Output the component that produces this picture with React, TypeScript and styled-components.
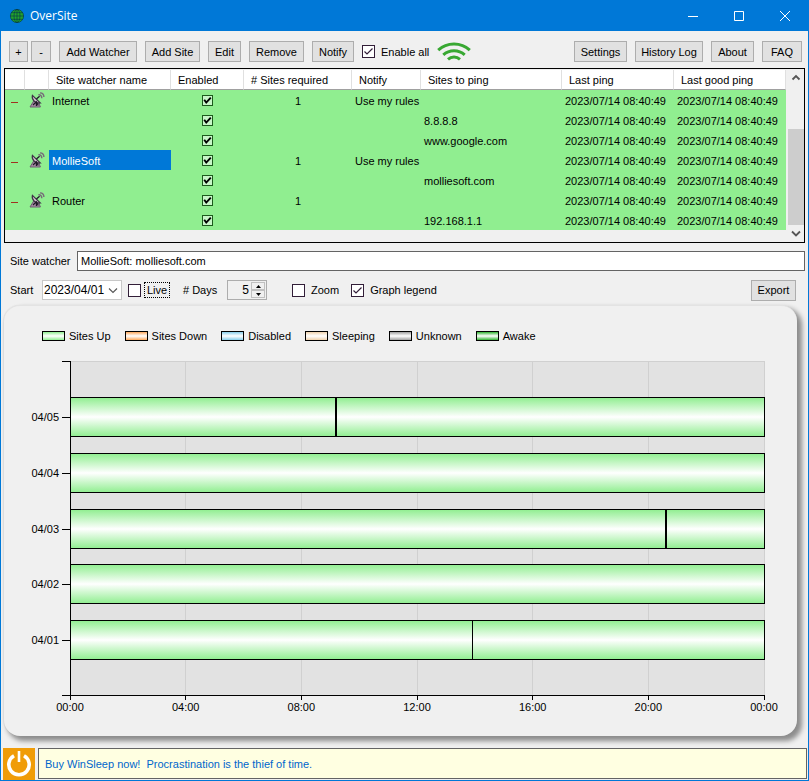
import React, { useState } from "react";
import styled, { createGlobalStyle, css } from "styled-components";

const GlobalStyle = createGlobalStyle`
  *, *::before, *::after { box-sizing: border-box; }
  body { margin: 0; background: #f0f0f0; }
  body, button, input, select {
    font-family: "Liberation Sans", Arial, sans-serif;
    font-size: 11px;
    line-height: 14px;
    color: #000;
  }
`;

const Window = styled.div`
  display: flex;
  flex-direction: column;
  min-height: 100vh;
  border: 1px solid #0078d7;
  background: #f0f0f0;
`;

const TitleBar = styled.header`
  display: flex;
  align-items: center;
  height: 30px;
  padding-left: 8px;
  background: #0078d7;
  color: #fff;
`;

const Title = styled.h1`
  flex: 1;
  margin: 0 0 0 5px;
  font: 400 12px/16px "Open Sans", sans-serif;
`;

const CaptionButton = styled.button`
  display: flex;
  align-items: center;
  justify-content: center;
  width: 46px;
  height: 30px;
  padding: 0;
  border: 0;
  background: transparent;
`;

const Toolbar = styled.div`
  display: flex;
  align-items: center;
  gap: 8px;
  padding: 10px 6px 6px 8px;
`;

const Button = styled.button<{ $w: number }>`
  width: ${(p) => p.$w}px;
  height: 21px;
  padding: 0;
  border: 1px solid #adadad;
  background: #e1e1e1;
  white-space: nowrap;
`;

const ExpandGroup = styled.div`
  display: flex;
  gap: 3px;
`;

const Spacer = styled.div`
  flex: 1;
`;

const CheckLabel = styled.label`
  display: flex;
  align-items: center;
  gap: 6px;
  white-space: nowrap;
`;

const tick = (path: string, stroke: string, width: number) =>
  `url("data:image/svg+xml,${encodeURIComponent(
    `<svg xmlns='http://www.w3.org/2000/svg' viewBox='0 0 11 11'><path d='${path}' fill='none' stroke='${stroke}' stroke-width='${width}'/></svg>`
  )}")`;

const CheckBox = styled.input.attrs({ type: "checkbox" })<{ $grid?: boolean }>`
  appearance: none;
  flex: none;
  display: block;
  margin: 0;
  width: 13px;
  height: 13px;
  border: 1px solid #321e38;
  background: #fff center / 11px 11px no-repeat;
  &:checked {
    background-image: ${tick("M1.5 5.5 L4 8 L9.5 2.5", "#321e38", 1.2)};
  }
  ${(p) =>
    p.$grid &&
    css`
      width: 11px;
      height: 11px;
      margin: 0 auto;
      border-color: #1c5a1c;
      background-color: #c8f6c8;
      background-size: 9px 9px;
      &:checked {
        background-image: ${tick("M1.5 4.5 L4 8 L9.5 2", "#000", 2.3)};
      }
    `}
`;

const GridFrame = styled.section`
  display: flex;
  margin: 0 3px;
  height: 175px;
  border: 1px solid #000;
`;

const GridScroller = styled.div`
  flex: 1;
  min-width: 0;
  overflow: hidden;
  padding-top: 1px;
`;

const Table = styled.table`
  width: 100%;
  table-layout: fixed;
  border-collapse: separate;
  border-spacing: 0;
`;

const Col = styled.col<{ $w?: number }>`
  width: ${(p) => (p.$w ? `${p.$w}px` : "auto")};
`;

const Th = styled.th`
  height: 20px;
  padding: 0 0 0 7px;
  border-right: 1px solid #e0e0e0;
  border-bottom: 1px solid #a0a0a0;
  background: #fff;
  font-weight: 400;
  text-align: left;
  white-space: nowrap;
`;

const Td = styled.td<{ $center?: boolean; $selected?: boolean }>`
  height: 20px;
  padding: 2px ${(p) => (p.$center ? 0 : 3)}px 0;
  background: ${(p) => (p.$selected ? "#0078d7" : "#90ee90")};
  color: ${(p) => (p.$selected ? "#fff" : "#000")};
  text-align: ${(p) => (p.$center ? "center" : "left")};
  white-space: nowrap;
`;

const IconTd = styled(Td)`
  padding: 0 0 0 4px;
  line-height: 0;
`;

const CheckTd = styled(Td)`
  padding: 0;
`;

const Toggle = styled.button`
  display: block;
  width: 16px;
  height: 18px;
  padding: 0;
  border: 0;
  background: transparent;
`;

const ScrollBar = styled.div`
  display: flex;
  flex-direction: column;
  width: 16px;
  margin-left: 2px;
  background: #f0f0f0;
`;

const ScrollButton = styled.button`
  height: 17px;
  padding: 0;
  border: 0;
  background: transparent;
  line-height: 0;
`;

const ScrollTrack = styled.div`
  flex: 1;
  display: flex;
  flex-direction: column;
  justify-content: flex-end;
`;

const ScrollThumb = styled.div`
  height: 69%;
  background: #cdcdcd;
`;

const WatcherRow = styled.div`
  display: flex;
  align-items: center;
  margin: 8px 3px 8px 9px;
`;

const WatcherInput = styled.input`
  flex: 1;
  min-width: 0;
  height: 20px;
  padding: 0 3px;
  border: 1px solid #646464;
  background: #fff;
`;

const OptionsRow = styled.div`
  display: flex;
  align-items: center;
  height: 22px;
  padding: 0 12px 0 9px;
`;

const FieldLabel = styled.label<{ $w: number }>`
  width: ${(p) => p.$w}px;
  white-space: nowrap;
`;

const DateBox = styled.div`
  display: grid;
  align-items: center;
  width: 80px;
  height: 20px;
  margin-right: 6px;
  border: 1px solid #c8c8c8;
  background: #fff;
  > * { grid-area: 1 / 1; }
  > svg { justify-self: end; margin-right: 3px; pointer-events: none; }
`;

const DateSelect = styled.select`
  appearance: none;
  width: 100%;
  height: 18px;
  padding: 0 0 0 1px;
  border: 0;
  background: transparent;
  font-size: 12px;
`;

const FocusText = styled.span`
  padding: 0 2px;
  outline: 1px dotted #000;
`;

const LiveLabel = styled(CheckLabel)`
  gap: 4px;
  width: 55px;
`;

const Spinner = styled.div`
  display: flex;
  width: 40px;
  height: 20px;
  margin-right: 25px;
  padding: 1px;
  border: 1px solid #adadad;
`;

const SpinnerInput = styled.input`
  width: 22px;
  padding: 0 2px 0 0;
  border: 0;
  background: transparent;
  font-size: 12px;
  text-align: right;
`;

const SpinnerButtons = styled.div`
  display: flex;
  flex: 1;
  flex-direction: column;
`;

const SpinnerButton = styled.button`
  display: flex;
  flex: 1;
  align-items: center;
  justify-content: center;
  min-height: 0;
  padding: 0;
  border: 1px solid #c0c0c0;
  background: #f0f0f0;
`;

const OptionChecks = styled.div`
  display: flex;
  gap: 12px;
`;

const ChartPanel = styled.section`
  flex: 1;
  margin: 4px 11px 12px 3px;
  padding: 23px 33px 39px 38px;
  border-top: 1px solid #e3e3e3;
  border-radius: 16px;
  background: #f0f0f0;
  box-shadow: 4px 4px 5px 1px #8c8c8c, -1px 0 1px #e2e2e2;
`;

const Legend = styled.ul`
  display: flex;
  flex-wrap: wrap;
  gap: 14px;
  margin: 0 0 18px;
  padding: 0;
  list-style: none;
`;

const LegendItem = styled.li`
  display: flex;
  align-items: center;
  gap: 4px;
`;

const Swatch = styled.span<{ $color: string }>`
  width: 23px;
  height: 10px;
  border: 1px solid #000;
  background: linear-gradient(${(p) => p.$color}, #fff 50%, ${(p) => p.$color});
`;

const Plot = styled.svg`
  display: block;
  width: calc(100% - 28px);
  height: 335px;
  margin-left: 28px;
  overflow: visible;
  font-size: 11px;
`;

const StatusBar = styled.footer`
  display: flex;
  gap: 3px;
  margin: 0 1px 0 2px;
`;

const StatusText = styled.div`
  display: flex;
  flex: 1;
  align-items: center;
  height: 31px;
  padding-left: 6px;
  border: 1px solid #646464;
  background: #ffffe1;
`;

const StatusLink = styled.a`
  color: #0066cc;
  text-decoration: none;
  white-space: pre;
`;

const Globe = () => (
  <svg width="16" height="16" viewBox="0 0 16 16" fill="none" stroke="#063c48" strokeWidth="0.7">
    <circle cx="8" cy="8" r="6.6" fill="#22a42c" />
    <ellipse cx="8" cy="8" rx="3" ry="6.6" />
    <path d="M8 1.4v13.2M1.4 8h13.2M2.4 4.7h11.2M2.4 11.3h11.2" />
  </svg>
);

const Wifi = () => (
  <svg width="34" height="20" viewBox="0 0 34 20" fill="none" stroke="#38a832" strokeWidth="3">
    <path d="M1.2 8.2C10 0 24 0 32.8 8.2M6.3 12.8c6-5.5 15.4-5.5 21.4 0M11 17.3c3.4-3 8.6-3 12 0" />
  </svg>
);

const Dish = () => (
  <svg width="16" height="18" viewBox="0 0 16 18">
    <path d="M1 16h10.4L9.4 11 5 9.5z" fill="#a78ca6" stroke="#6c5c70" />
    <path d="M3.4 4.4C2.4 8.5 6 12.6 11.4 12z" fill="#d0c2ce" stroke="#403648" strokeWidth="1.2" />
    <path d="M7.4 8L10.6 5.2M4 14l3.4-3.3 1.8 3.8M7.4 10.7v4.3" fill="none" stroke="#201828" strokeWidth="1.2" />
    <path d="M9.4 3.8c2-.2 3.4 1.2 3.4 3.4M11 1.9c2.6.1 3.9 1.6 3.9 4" fill="none" stroke="#766a78" strokeWidth="1.4" />
  </svg>
);

const Chevron = ({ up = false, bold = false }: { up?: boolean; bold?: boolean }) => (
  <svg width="10" height="7" viewBox="0 0 10 7" fill="none" stroke="#555" strokeWidth={bold ? 1.8 : 1.1}>
    <path d={up ? "M1.5 5.5L5 2l3.5 3.5" : "M1 1.5l4 4 4-4"} />
  </svg>
);

const PowerIcon = () => (
  <svg width="32" height="32" viewBox="0 0 32 32">
    <rect width="32" height="32" fill="#f09c08" />
    <path d="M11 7.7a10.2 10.2 0 1 0 10 0" fill="none" stroke="#fff" strokeWidth="3.6" />
    <path d="M16 3v11" stroke="#fff" strokeWidth="2.6" />
  </svg>
);

const stamp = "2023/07/14 08:40:49";

const rows = [
  { name: "Internet", required: "1", notify: "Use my rules", site: "" },
  { name: "", required: "", notify: "", site: "8.8.8.8" },
  { name: "", required: "", notify: "", site: "www.google.com" },
  { name: "MollieSoft", required: "1", notify: "Use my rules", site: "" },
  { name: "", required: "", notify: "", site: "molliesoft.com" },
  { name: "Router", required: "1", notify: "", site: "" },
  { name: "", required: "", notify: "", site: "192.168.1.1" },
];

const legend = [
  ["Sites Up", "#90ee90"],
  ["Sites Down", "#ffa95c"],
  ["Disabled", "#87ceeb"],
  ["Sleeping", "#f0d2ac"],
  ["Unknown", "#a0a0a0"],
  ["Awake", "#32b432"],
];

const days = [
  { label: "04/05", breaks: [{ at: 38.2, width: 2 }] },
  { label: "04/04", breaks: [] },
  { label: "04/03", breaks: [{ at: 85.8, width: 2 }] },
  { label: "04/02", breaks: [] },
  { label: "04/01", breaks: [{ at: 57.9, width: 1 }] },
];

const hours = ["00:00", "04:00", "08:00", "12:00", "16:00", "20:00", "00:00"];
const plotHeight = 334;
const dayMiddle = (index: number) => Math.ceil(((index + 1) * (plotHeight + 0.5)) / 6);

const Chart = () => (
  <Plot role="img" aria-label="Site status by day">
    <defs>
      <linearGradient id="up" x1="0" y1="0" x2="0" y2="1">
        <stop offset="0" stopColor="#90ee90" />
        <stop offset="0.5" stopColor="#fff" />
        <stop offset="1" stopColor="#90ee90" />
      </linearGradient>
    </defs>
    <g shapeRendering="crispEdges">
      <rect width="100%" height={plotHeight} fill="#e2e2e2" />
      <line x1="0" x2="100%" y1="0.5" y2="0.5" stroke="#d0d0d0" />
      {hours.map((_, i) => (
        <line key={i} x1={`${(i * 100) / 6}%`} x2={`${(i * 100) / 6}%`} y1="0" y2={plotHeight} stroke="#d0d0d0" />
      ))}
      {hours.map((_, i) => (
        <line key={i} x1={`${(i * 100) / 6}%`} x2={`${(i * 100) / 6}%`} y1={plotHeight} y2={plotHeight + 5} stroke="#000" />
      ))}
      {days.map((day, i) => {
        const middle = dayMiddle(i);
        return (
          <g key={day.label}>
            <rect x="0" y={middle - 19.5} width="100%" height="39" fill="url(#up)" stroke="#000" />
            <line x1="-8" x2="0" y1={middle + 0.5} y2={middle + 0.5} stroke="#000" />
            {day.breaks.map((b) => (
              <rect key={b.at} x={`${b.at}%`} y={middle - 20} width={b.width} height="40" />
            ))}
          </g>
        );
      })}
      <path d={`M-8 .5H.5V${plotHeight + 0.5}H-8`} fill="none" stroke="#000" />
      <line x1="0" x2="100%" y1={plotHeight + 0.5} y2={plotHeight + 0.5} stroke="#000" />
    </g>
    {days.map((day, i) => (
      <text key={day.label} x="-11" y={dayMiddle(i) + 4} textAnchor="end">
        {day.label}
      </text>
    ))}
    {hours.map((hour, i) => (
      <text key={i} x={`${(i * 100) / 6}%`} y={plotHeight + 16} textAnchor="middle">
        {hour}
      </text>
    ))}
  </Plot>
);

export default function App() {
  const [numDays, setNumDays] = useState(5);
  return (
    <>
      <GlobalStyle />
      <Window>
        <TitleBar>
          <Globe />
          <Title>OverSite</Title>
          <CaptionButton aria-label="Minimize">
            <svg width="10" height="10" stroke="#fff"><path d="M0 5.5h10" /></svg>
          </CaptionButton>
          <CaptionButton aria-label="Maximize">
            <svg width="10" height="10" fill="none" stroke="#fff"><path d="M.5.5h9v9h-9z" /></svg>
          </CaptionButton>
          <CaptionButton aria-label="Close">
            <svg width="10" height="10" stroke="#fff"><path d="M0 0l10 10M10 0L0 10" /></svg>
          </CaptionButton>
        </TitleBar>

        <Toolbar>
          <ExpandGroup>
            <Button $w={19}>+</Button>
            <Button $w={20}>-</Button>
          </ExpandGroup>
          <Button $w={78}>Add Watcher</Button>
          <Button $w={55}>Add Site</Button>
          <Button $w={33}>Edit</Button>
          <Button $w={55}>Remove</Button>
          <Button $w={42}>Notify</Button>
          <CheckLabel>
            <CheckBox defaultChecked />
            Enable all
          </CheckLabel>
          <Wifi />
          <Spacer />
          <Button $w={53}>Settings</Button>
          <Button $w={68}>History Log</Button>
          <Button $w={43}>About</Button>
          <Button $w={40}>FAQ</Button>
        </Toolbar>

        <GridFrame>
          <GridScroller>
            <Table>
              <colgroup>
                <Col $w={20} />
                <Col $w={24} />
                <Col $w={122} />
                <Col $w={73} />
                <Col $w={108} />
                <Col $w={69} />
                <Col />
                <Col $w={112} />
                <Col $w={112} />
              </colgroup>
              <thead>
                <tr>
                  <Th />
                  <Th />
                  <Th>Site watcher name</Th>
                  <Th>Enabled</Th>
                  <Th># Sites required</Th>
                  <Th>Notify</Th>
                  <Th>Sites to ping</Th>
                  <Th>Last ping</Th>
                  <Th>Last good ping</Th>
                </tr>
              </thead>
              <tbody>
                {rows.map((row, i) => (
                  <tr key={i}>
                    <IconTd>
                      {row.name && (
                        <Toggle aria-label={`Collapse ${row.name}`}>
                          <svg width="16" height="18" stroke="#a03020"><path d="M2 11.5h7" /></svg>
                        </Toggle>
                      )}
                    </IconTd>
                    <IconTd>{row.name && <Dish />}</IconTd>
                    <Td $selected={row.name === "MollieSoft"}>{row.name}</Td>
                    <CheckTd $center>
                      <CheckBox $grid defaultChecked aria-label={`Enable ${row.name || row.site}`} />
                    </CheckTd>
                    <Td $center>{row.required}</Td>
                    <Td>{row.notify}</Td>
                    <Td>{row.site}</Td>
                    <Td>{stamp}</Td>
                    <Td>{stamp}</Td>
                  </tr>
                ))}
              </tbody>
            </Table>
          </GridScroller>
          <ScrollBar>
            <ScrollButton aria-label="Scroll up"><Chevron up bold /></ScrollButton>
            <ScrollTrack><ScrollThumb /></ScrollTrack>
            <ScrollButton aria-label="Scroll down"><Chevron bold /></ScrollButton>
          </ScrollBar>
        </GridFrame>

        <WatcherRow>
          <FieldLabel $w={67} htmlFor="watcher">Site watcher</FieldLabel>
          <WatcherInput id="watcher" defaultValue="MollieSoft: molliesoft.com" />
        </WatcherRow>

        <OptionsRow>
          <FieldLabel $w={32} htmlFor="start">Start</FieldLabel>
          <DateBox>
            <DateSelect id="start"><option>2023/04/01</option></DateSelect>
            <Chevron />
          </DateBox>
          <LiveLabel>
            <CheckBox />
            <FocusText>Live</FocusText>
          </LiveLabel>
          <FieldLabel $w={44} htmlFor="days"># Days</FieldLabel>
          <Spinner>
            <SpinnerInput id="days" value={numDays} onChange={(e) => setNumDays(Number(e.target.value) || 1)} />
            <SpinnerButtons>
              <SpinnerButton aria-label="More days" onClick={() => setNumDays(numDays + 1)}>
                <svg width="5" height="3"><path d="M0 3L2.5 0 5 3z" /></svg>
              </SpinnerButton>
              <SpinnerButton aria-label="Fewer days" onClick={() => setNumDays(Math.max(1, numDays - 1))}>
                <svg width="5" height="3"><path d="M0 0l2.5 3L5 0z" /></svg>
              </SpinnerButton>
            </SpinnerButtons>
          </Spinner>
          <OptionChecks>
            <CheckLabel><CheckBox />Zoom</CheckLabel>
            <CheckLabel><CheckBox defaultChecked />Graph legend</CheckLabel>
          </OptionChecks>
          <Spacer />
          <Button $w={45}>Export</Button>
        </OptionsRow>

        <ChartPanel>
          <Legend>
            {legend.map(([label, color]) => (
              <LegendItem key={label}>
                <Swatch $color={color} />
                {label}
              </LegendItem>
            ))}
          </Legend>
          <Chart />
        </ChartPanel>

        <StatusBar>
          <PowerIcon />
          <StatusText>
            <StatusLink href="#winsleep">{"Buy WinSleep now!  Procrastination is the thief of time."}</StatusLink>
          </StatusText>
        </StatusBar>
      </Window>
    </>
  );
}
